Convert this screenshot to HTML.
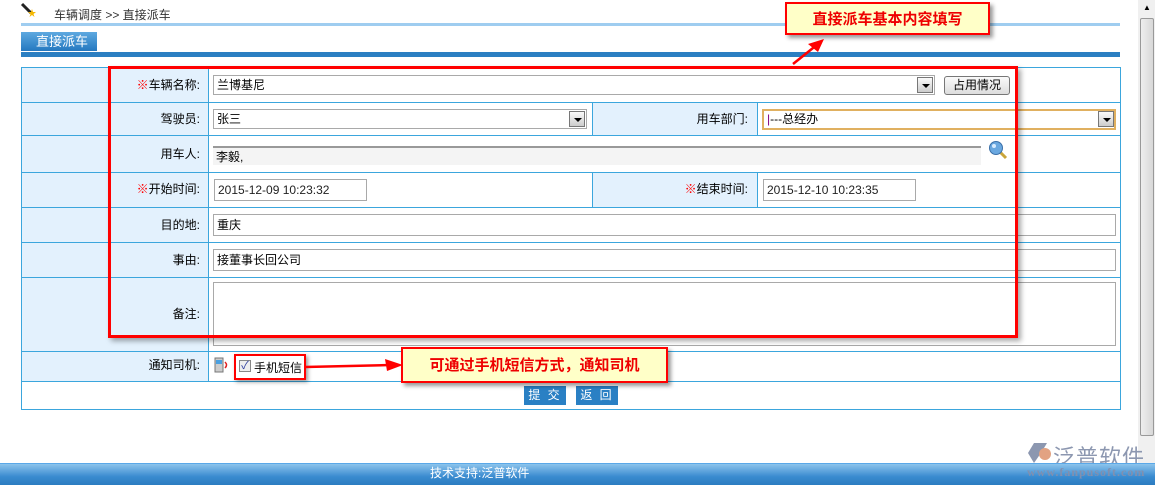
<!DOCTYPE html>
<html><head><meta charset="utf-8"><style>
*{margin:0;padding:0;box-sizing:border-box}
body{width:1155px;height:485px;position:relative;overflow:hidden;background:#fff;font-family:"Liberation Sans","Noto Sans CJK SC",sans-serif;font-size:12px;color:#000}
.a{position:absolute}
.lbl{position:absolute;background:#e3f1fd}
.hl{position:absolute;height:1px;background:#3ba6dd}
.vl{position:absolute;width:1px;background:#3ba6dd}
.inp{position:absolute;border:1px solid #a9a9a9;background:#fff;font-size:12px;padding-left:3px;line-height:20px;height:22px}
.dd{position:absolute;width:16px;height:16px;border:1px solid #777;background:linear-gradient(#fafafa,#ccc)}
.dd:after{content:"";position:absolute;left:4px;top:6px;border-left:4px solid transparent;border-right:4px solid transparent;border-top:4px solid #000}
.red{color:#f00}
.t{position:absolute;text-align:right;line-height:14px}
</style></head><body>
<svg class="a" style="left:20px;top:2px" width="18" height="16"><line x1="2" y1="2" x2="11" y2="11" stroke="#222" stroke-width="3"/><polygon points="12,7 13,10 16,10 13.5,12 14.5,15 12,13 9.5,15 10.5,12 8,10 11,10" fill="#f5b800"/></svg>
<div class="a" style="left:54px;top:6px;color:#333">车辆调度 &gt;&gt; 直接派车</div>
<div class="a" style="left:21px;top:23px;width:1099px;height:3px;background:#9fcdf0"></div>
<div class="a" style="left:21px;top:32px;width:76px;height:19px;background:linear-gradient(#5ea9e0,#2478c0);color:#fff;font-size:13px;padding-left:15px;line-height:20px">直接派车</div>
<div class="a" style="left:21px;top:52px;width:1099px;height:5px;background:#2b7fc2"></div>

<div class="a" style="left:21px;top:67px;width:1100px;height:343px;border:1px solid #3ba6dd"></div>
<div class="lbl" style="left:22px;top:68px;width:186px;height:313px"></div>
<div class="lbl" style="left:593px;top:103px;width:164px;height:32px"></div>
<div class="lbl" style="left:593px;top:173px;width:164px;height:34px"></div>
<div class="vl" style="left:208px;top:67px;height:314px"></div>
<div class="vl" style="left:592px;top:102px;height:33px"></div>
<div class="vl" style="left:757px;top:102px;height:33px"></div>
<div class="vl" style="left:592px;top:172px;height:35px"></div>
<div class="vl" style="left:757px;top:172px;height:35px"></div>
<div class="hl" style="left:21px;top:102px;width:1100px"></div>
<div class="hl" style="left:21px;top:135px;width:1100px"></div>
<div class="hl" style="left:21px;top:172px;width:1100px"></div>
<div class="hl" style="left:21px;top:207px;width:1100px"></div>
<div class="hl" style="left:21px;top:242px;width:1100px"></div>
<div class="hl" style="left:21px;top:277px;width:1100px"></div>
<div class="hl" style="left:21px;top:351px;width:1100px"></div>
<div class="hl" style="left:21px;top:381px;width:1100px"></div>

<div class="t" style="left:120px;top:78px;width:80px"><span class="red">※</span>车辆名称:</div>
<div class="t" style="left:120px;top:112px;width:80px">驾驶员:</div>
<div class="t" style="left:120px;top:147px;width:80px">用车人:</div>
<div class="t" style="left:120px;top:182px;width:80px"><span class="red">※</span>开始时间:</div>
<div class="t" style="left:120px;top:218px;width:80px">目的地:</div>
<div class="t" style="left:120px;top:253px;width:80px">事由:</div>
<div class="t" style="left:120px;top:307px;width:80px">备注:</div>
<div class="t" style="left:120px;top:358px;width:80px">通知司机:</div>
<div class="t" style="left:660px;top:112px;width:88px">用车部门:</div>
<div class="t" style="left:660px;top:182px;width:88px"><span class="red">※</span>结束时间:</div>

<div class="inp" style="left:213px;top:75px;width:722px;height:20px;line-height:18px">兰博基尼</div>
<div class="dd" style="left:917px;top:77px"></div>
<div class="a" style="left:944px;top:76px;width:66px;height:19px;border:1px solid #777;border-radius:3px;background:linear-gradient(#fafafa,#ddd);text-align:center;line-height:17px">占用情况</div>
<div class="inp" style="left:213px;top:109px;width:374px;height:20px;line-height:18px">张三</div>
<div class="dd" style="left:569px;top:111px"></div>
<div class="inp" style="left:762px;top:109px;width:354px;height:21px;line-height:17px;border:2px solid #e0b060"><span style="color:#800080">|</span>---总经办</div>
<div class="dd" style="left:1098px;top:111px"></div>
<div class="inp" style="left:213px;top:146px;width:768px;height:19px;line-height:18px;background:#f4f4f4;border:none;border-top:2px solid #999">李毅,</div>
<svg class="a" style="left:988px;top:140px" width="20" height="20"><line x1="12" y1="12" x2="18" y2="18" stroke="#c9a53a" stroke-width="3"/><circle cx="8" cy="8" r="6.5" fill="#6aa8e0" stroke="#3a6fa8"/><circle cx="6" cy="6" r="2" fill="#d8ecff"/></svg>
<div class="inp" style="left:214px;top:179px;width:153px;height:22px;color:#222">2015-12-09 10:23:32</div>
<div class="inp" style="left:763px;top:179px;width:153px;height:22px;color:#222">2015-12-10 10:23:35</div>
<div class="inp" style="left:213px;top:214px;width:903px">重庆</div>
<div class="inp" style="left:213px;top:249px;width:903px">接董事长回公司</div>
<div class="inp" style="left:213px;top:282px;width:903px;height:64px"></div>

<svg class="a" style="left:214px;top:356px" width="16" height="18"><rect x="1" y="2" width="8" height="14" fill="#ccc" stroke="#777"/><rect x="2" y="4" width="6" height="4" fill="#4aa0e0"/><path d="M11 6 q3 3 0 6" stroke="#e02020" fill="none" stroke-width="1.5"/></svg>
<div class="a" style="left:239px;top:360px;width:12px;height:12px;border:1px solid #888;background:#eee;font-size:11px;line-height:10px;color:#3040a0;text-align:center">✓</div>
<div class="a" style="left:254px;top:359px">手机短信</div>

<div class="a" style="left:524px;top:386px;width:42px;height:19px;background:#2a80c4;color:#fff;text-align:center;line-height:19px;letter-spacing:2px">提 交</div>
<div class="a" style="left:576px;top:386px;width:42px;height:19px;background:#2a80c4;color:#fff;text-align:center;line-height:19px;letter-spacing:2px">返 回</div>

<div class="a" style="left:108px;top:66px;width:910px;height:272px;border:3px solid #f00;box-shadow:3px 3px 5px rgba(0,0,0,.35)"></div>
<div class="a" style="left:785px;top:2px;width:205px;height:33px;border:2px solid #f00;background:#ffffc8;color:#e00;font-weight:bold;font-size:15px;text-align:center;line-height:29px;font-family:'Noto Sans CJK SC',sans-serif;box-shadow:3px 3px 4px rgba(0,0,0,.4)">直接派车基本内容填写</div>
<svg class="a" style="left:790px;top:34px" width="40" height="34"><line x1="3" y1="30" x2="28" y2="10" stroke="#f00" stroke-width="2.5"/><polygon points="34,5 18,10 28,18" fill="#f00"/></svg>
<div class="a" style="left:234px;top:354px;width:72px;height:26px;border:2px solid #f00;box-shadow:2px 2px 4px rgba(0,0,0,.4)"></div>
<svg class="a" style="left:305px;top:358px" width="100" height="16"><line x1="0" y1="9" x2="85" y2="7" stroke="#f00" stroke-width="2.5"/><polygon points="98,7 80,1 82,13" fill="#f00"/></svg>
<div class="a" style="left:401px;top:347px;width:267px;height:36px;border:2px solid #f00;background:#ffffc8;color:#e00;font-weight:bold;font-size:15px;text-align:center;line-height:32px;font-family:'Noto Sans CJK SC',sans-serif;box-shadow:3px 3px 4px rgba(0,0,0,.4)">可通过手机短信方式，通知司机</div>

<div class="a" style="left:1138px;top:0;width:17px;height:463px;background:#f0f0f0"></div>
<div class="a" style="left:1140px;top:18px;width:14px;height:418px;border:1px solid #999;border-radius:2px;background:linear-gradient(90deg,#eee,#d8d8d8)"></div>
<div class="a" style="left:1143px;top:3px;font-size:8px">▲</div>

<svg class="a" style="left:1025px;top:441px" width="30" height="24"><polygon points="3,12 9,2 22,2 16,12 9,22" fill="#8c97b0"/><circle cx="20" cy="13" r="6" fill="#e2a282"/></svg>
<div class="a" style="left:1053px;top:440px;font-size:22px;color:#8c97b0;letter-spacing:1px">泛普软件</div>

<div class="a" style="left:0;top:463px;width:1155px;height:22px;background:linear-gradient(#8cc4ec,#3a8bd0 60%,#2b7cc0);border-top:1px solid #5aa8e8"></div>
<div class="a" style="left:430px;top:466px;color:#fff;line-height:14px">技术支持:泛普软件</div>
<div class="a" style="left:1027px;top:465px;font-size:12px;color:#8090b0;font-family:'Liberation Serif',serif;font-weight:bold;letter-spacing:1px">www.fanpusoft.com</div>
</body></html>
